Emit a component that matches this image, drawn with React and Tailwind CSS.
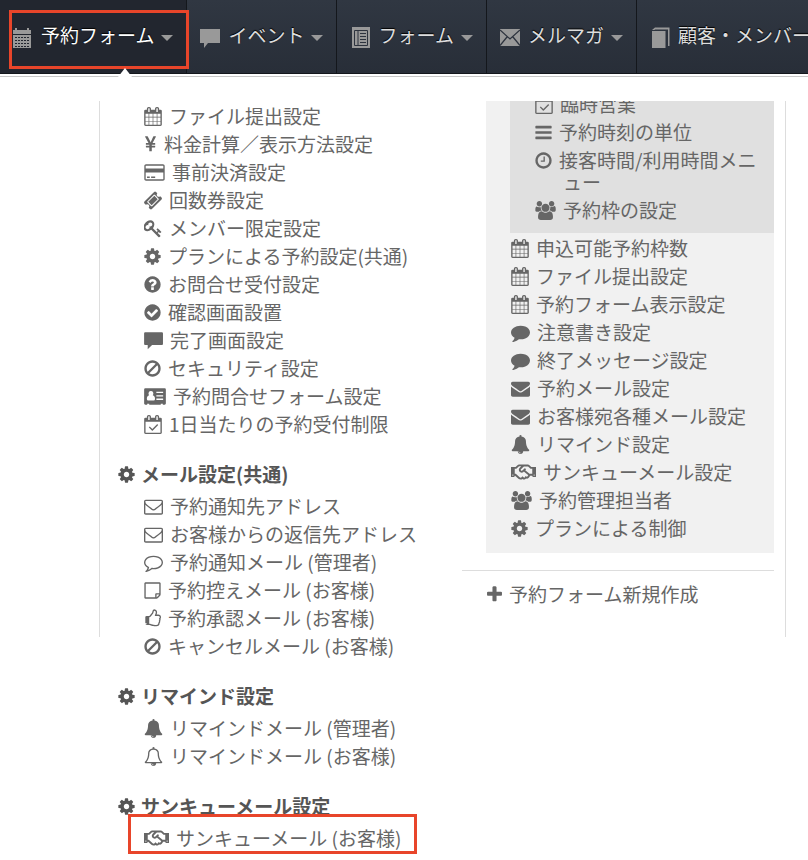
import { FaRegHandshake } from 'react-icons/fa'

// solid glyphs, every one is 1792 units high
const GLYPHS = {
  calendar: {
    box: '64 0 1664 1792',
    size: 'w-[18px]',
    d: 'M192 1664h288v-288h-288v288zm352 0h320v-288h-320v288zm-352-352h288v-320h-288v320zm352 0h320v-320h-320v320zm-352-384h288v-288h-288v288zm736 736h320v-288h-320v288zm-384-736h320v-288h-320v288zm768 736h288v-288h-288v288zm-384-352h320v-320h-320v320zm-352-864v-288q0-13-9.5-22.5t-22.5-9.5h-64q-13 0-22.5 9.5t-9.5 22.5v288q0 13 9.5 22.5t22.5 9.5h64q13 0 22.5-9.5t9.5-22.5zm736 864h288v-320h-288v320zm-384-384h320v-288h-320v288zm384 0h288v-288h-288v288zm32-480v-288q0-13-9.5-22.5t-22.5-9.5h-64q-13 0-22.5 9.5t-9.5 22.5v288q0 13 9.5 22.5t22.5 9.5h64q13 0 22.5-9.5t9.5-22.5zm384-64v1280q0 52-38 90t-90 38h-1408q-52 0-90-38t-38-90v-1280q0-52 38-90t90-38h128v-96q0-66 47-113t113-47h64q66 0 113 47t47 113v96h384v-96q0-66 47-113t113-47h64q66 0 113 47t47 113v96h128q52 0 90 38t38 90z',
  },
  calendarCheck: {
    box: '0 0 1664 1792',
    size: 'w-[18px]',
    d: 'M1303 964l-512 512q-10 9-23 9t-23-9l-288-288q-9-10-9-23t9-22l46-46q9-9 22-9t23 9l220 220 444-444q10-9 23-9t22 9l46 46q9 9 9 22t-9 23zm-1175 700h1408v-1024h-1408v1024zm384-1216v-288q0-14-9-23t-23-9h-64q-14 0-23 9t-9 23v288q0 14 9 23t23 9h64q14 0 23-9t9-23zm768 0v-288q0-14-9-23t-23-9h-64q-14 0-23 9t-9 23v288q0 14 9 23t23 9h64q14 0 23-9t9-23zm384-64v1280q0 52-38 90t-90 38h-1408q-52 0-90-38t-38-90v-1280q0-52 38-90t90-38h128v-96q0-66 47-113t113-47h64q66 0 113 47t47 113v96h384v-96q0-66 47-113t113-47h64q66 0 113 47t47 113v96h128q52 0 90 38t38 90z',
  },
  yen: {
    box: '382 0 1028 1792',
    size: 'w-[13px]',
    d: 'M985.5 1536h-172q-13 0-22.5-9t-9.5-23v-330h-288q-13 0-22.5-9t-9.5-23v-103q0-13 9.5-22.5t22.5-9.5h288v-85h-288q-13 0-22.5-9t-9.5-23v-104q0-13 9.5-22.5t22.5-9.5h214l-321-578q-8-16 0-32 10-16 28-16h194q19 0 29 18l215 425q19 38 56 125 10-24 30.5-68t27.5-61l191-420q8-19 29-19h191q17 0 27 16 9 14 1 31l-313 579h215q13 0 22.5 9.5t9.5 22.5v104q0 14-9.5 23t-22.5 9h-290v85h290q13 0 22.5 9.5t9.5 22.5v103q0 14-9.5 23t-22.5 9h-290v330q0 13-9.5 22.5t-22.5 9.5z',
  },
  card: {
    box: '0 0 1920 1792',
    size: 'w-[21px]',
    d: 'M1760 128q66 0 113 47t47 113v1216q0 66-47 113t-113 47h-1600q-66 0-113-47t-47-113v-1216q0-66 47-113t113-47h1600zm-1600 128q-13 0-22.5 9.5t-9.5 22.5v224h1664v-224q0-13-9.5-22.5t-22.5-9.5h-1600zm1600 1280q13 0 22.5-9.5t9.5-22.5v-608h-1664v608q0 13 9.5 22.5t22.5 9.5h1600zm-1504-128v-128h256v128h-256zm384 0v-128h384v128h-384z',
  },
  ticket: {
    box: '64 0 1664 1792',
    size: 'w-[18px]',
    d: 'M1024 452l316 316-572 572-316-316zm-211 979l618-618q19-19 19-45t-19-45l-362-362q-18-18-45-18t-45 18l-618 618q-19 19-19 45t19 45l362 362q18 18 45 18t45-18zm889-637l-907 908q-37 37-90.5 37t-90.5-37l-126-126q56-56 56-136t-56-136-136-56-136 56l-125-126q-37-37-37-90.5t37-90.5l907-906q37-37 90.5-37t90.5 37l125 125q-56 56-56 136t56 136 136 56 136-56l126 125q37 37 37 90.5t-37 90.5z',
  },
  key: {
    box: '64 0 1664 1792',
    size: 'w-[18px]',
    d: 'M832 512q0-80-56-136t-136-56-136 56-56 136q0 42 19 83-41-19-83-19-80 0-136 56t-56 136 56 136 136 56 136-56 56-136q0-42-19-83 41 19 83 19 80 0 136-56t56-136zm851 704q0 17-49 66t-66 49q-9 0-28.5-16t-36.5-33-38.5-40-24.5-26l-96 96 220 220q28 28 28 68 0 42-39 81t-81 39q-40 0-68-28l-671-671q-176 131-365 131-163 0-265.5-102.5t-102.5-265.5q0-160 95-313t248-248 313-95q163 0 265.5 102.5t102.5 265.5q0 189-131 365l355 355 96-96q-3-3-26-24.5t-40-38.5-33-36.5-16-28.5q0-17 49-66t66-49q13 0 23 10 6 6 46 44.5t82 79.5 86.5 86 73 78 28.5 41z',
  },
  cog: {
    box: '128 0 1536 1792',
    size: 'w-[17px]',
    d: 'M1152 896q0-106-75-181t-181-75-181 75-75 181 75 181 181 75 181-75 75-181zm512-109v222q0 12-8 23t-20 13l-185 28q-19 54-39 91 35 50 107 138 10 12 10 25t-9 23q-27 37-99 108t-94 71q-12 0-26-9l-138-108q-44 23-91 38-16 136-29 186-7 28-36 28h-222q-14 0-24.5-8.5t-11.5-21.5l-28-184q-49-16-90-37l-141 107q-10 9-25 9-14 0-25-11-126-114-165-168-7-10-7-23 0-12 8-23 15-21 51-66.5t54-70.5q-27-50-41-99l-183-27q-13-2-21-12.5t-8-23.5v-222q0-12 8-23t19-13l186-28q14-46 39-92-40-57-107-138-10-12-10-24 0-10 9-23 26-36 98.5-107.5t94.5-71.5q13 0 26 10l138 107q44-23 91-38 16-136 29-186 7-28 36-28h222q14 0 24.5 8.5t11.5 21.5l28 184q49 16 90 37l142-107q9-9 24-9 13 0 25 10 129 119 165 170 7 8 7 22 0 12-8 23-15 21-51 66.5t-54 70.5q26 50 41 98l183 28q13 2 21 12.5t8 23.5z',
  },
  question: {
    box: '128 0 1536 1792',
    size: 'w-[17px]',
    d: 'M1024 1376v-192q0-14-9-23t-23-9h-192q-14 0-23 9t-9 23v192q0 14 9 23t23 9h192q14 0 23-9t9-23zm256-672q0-88-55.5-163t-138.5-116-170-41q-243 0-371 213-15 24 8 42l132 100q7 6 19 6 16 0 25-12 53-68 86-92 34-24 86-24 48 0 85.5 26t37.5 59q0 38-20 61t-68 45q-63 28-115.5 86.5t-52.5 125.5v36q0 14 9 23t23 9h192q14 0 23-9t9-23q0-19 21.5-49.5t54.5-49.5q32-18 49-28.5t46-35 44.5-48 28-60.5 12.5-81zm384 192q0 209-103 385.5t-279.5 279.5-385.5 103-385.5-103-279.5-279.5-103-385.5 103-385.5 279.5-279.5 385.5-103 385.5 103 279.5 279.5 103 385.5z',
  },
  check: {
    box: '128 0 1536 1792',
    size: 'w-[17px]',
    d: 'M1412 734q0-28-18-46l-91-90q-19-19-45-19t-45 19l-408 407-226-226q-19-19-45-19t-45 19l-91 90q-18 18-18 46 0 27 18 45l362 362q19 19 45 19 27 0 46-19l543-543q18-18 18-45zm252 162q0 209-103 385.5t-279.5 279.5-385.5 103-385.5-103-279.5-279.5-103-385.5 103-385.5 279.5-279.5 385.5-103 385.5 103 279.5 279.5 103 385.5z',
  },
  message: {
    box: '0 0 1792 1792',
    size: 'w-[19px]',
    d: 'M110 110h1580q100 0 100 100v1010q0 100-100 100h-930l-410 400v-400h-240q-100 0-100-100v-1010q0-100 100-100z',
  },
  ban: {
    box: '128 0 1536 1792',
    size: 'w-[17px]',
    d: 'M1440 893q0-161-87-295l-754 753q137 89 297 89 111 0 211.5-43.5t173.5-116.5 116-174.5 43-212.5zm-999 299l755-754q-135-91-300-91-148 0-273 73t-198 199-73 274q0 162 89 299zm1223-299q0 157-61 300t-163.5 246-245 164-298.5 61-298.5-61-245-164-163.5-246-61-300 61-299.5 163.5-245.5 245-164 298.5-61 298.5 61 245 164 163.5 245.5 61 299.5z',
  },
  addressCard: {
    box: '0 0 2048 1792',
    size: 'w-[22px]',
    d: 'M110 128h1828q110 0 110 110v1316q0 110-110 110h-178v-96h-192v96h-1088v-96h-192v96h-178q-110 0-110-110v-1316q0-110 110-110zM640 384a230 230 0 0 0-170 385q-214 40-214 360 0 151 130 151h508q130 0 130-151 0-320-214-360a230 230 0 0 0-170-385zM1152 448v128h640v-128zM1152 768v128h640v-128zM1152 1088v128h640v-128z',
  },
  envelopeOutline: {
    box: '0 0 1792 1792',
    size: 'w-[19px]',
    d: 'M1664 1504v-768q-32 36-69 66-268 206-426 338-51 43-83 67t-86.5 48.5-102.5 24.5h-2q-48 0-102.5-24.5t-86.5-48.5-83-67q-158-132-426-338-37-30-69-66v768q0 13 9.5 22.5t22.5 9.5h1472q13 0 22.5-9.5t9.5-22.5zm0-1051v-24.5l-.5-13-3-12.5-5.5-9-9-7.5-14-2.5h-1472q-13 0-22.5 9.5t-9.5 22.5q0 168 147 284 193 152 401 317 6 5 35 29.5t46 37.5 44.5 31.5 50.5 27.5 43 9h2q20 0 43-9t50.5-27.5 44.5-31.5 46-37.5 35-29.5q208-165 401-317 54-43 100.5-115.5t46.5-131.5zm128-37v1088q0 66-47 113t-113 47h-1472q-66 0-113-47t-47-113v-1088q0-66 47-113t113-47h1472q66 0 113 47t47 113z',
  },
  envelope: {
    box: '0 0 1792 1792',
    size: 'w-[19px]',
    d: 'M1792 710v794q0 66-47 113t-113 47h-1472q-66 0-113-47t-47-113v-794q44 49 101 87 362 246 497 345 57 42 92.5 65.5t94.5 48 110 24.5h2q51 0 110-24.5t94.5-48 92.5-65.5q170-123 498-345 57-39 100-87zm0-294q0 79-49 151t-122 123q-376 261-468 325-10 7-42.5 31t-54 38.5-52 32.5-57.5 27-50 9h-2q-23 0-50-9t-57.5-27-52-32.5-54-38.5-42.5-31q-91-64-262-182.5t-205-142.5q-62-42-117-115.5t-55-136.5q0-78 41.5-130t118.5-52h1472q65 0 112.5 47t47.5 113z',
  },
  commentOutline: {
    box: '0 0 1792 1792',
    size: 'w-[19px]',
    d: 'M896 384q-204 0-381.5 69.5t-282 187.5-104.5 255q0 112 71.5 213.5t201.5 175.5l87 50-27 96q-24 91-70 172 152-63 275-171l43-38 57 6q69 8 130 8 204 0 381.5-69.5t282-187.5 104.5-255-104.5-255-282-187.5-381.5-69.5zm896 512q0 174-120 321.5t-326 233-450 85.5q-70 0-145-8-198 175-460 242-49 14-114 22h-5q-15 0-27-10.5t-16-27.5v-1q-3-4-.5-12t2-10 4.5-9.5l6-9 7-8.5 8-9q7-8 31-34.5t34.5-38 31-39.5 32.5-51 27-59 26-76q-157-89-247.5-220t-90.5-281q0-174 120-321.5t326-233 450-85.5 450 85.5 326 233 120 321.5z',
  },
  comment: {
    box: '0 0 1792 1792',
    size: 'w-[19px]',
    d: 'M1792 896q0 174-120 321.5t-326 233-450 85.5q-70 0-145-8-198 175-460 242-49 14-114 22-17 2-30.5-9t-17.5-29v-1q-3-4-.5-12t2-10 4.5-9.5l6-9 7-8.5 8-9q7-8 31-34.5t34.5-38 31-39.5 32.5-51 27-59 26-76q-157-89-247.5-220t-90.5-281q0-130 71-248.5t191-204.5 286-136.5 348-50.5q244 0 450 85.5t326 233 120 321.5z',
  },
  note: {
    box: '0 0 1536 1792',
    size: 'w-[17px]',
    d: 'M1400 1280h-248v248q29-10 41-22l185-185q12-12 22-41zm-280-128h288v-896h-1280v1280h896v-288q0-40 28-68t68-28zm416-928v1024q0 40-20 88t-48 76l-184 184q-28 28-76 48t-88 20h-1024q-40 0-68-28t-28-68v-1344q0-40 28-68t68-28h1344q40 0 68 28t28 68z',
  },
  thumbsUp: {
    box: '0 0 1664 1792',
    size: 'w-[17px]',
    d: 'M256 1408q0-26-19-45t-45-19-45 19-19 45 19 45 45 19 45-19 19-45zm1280-640q0-51-39-89.5t-89-38.5h-352q0-58 48-159.5t48-160.5q0-98-32-145t-128-47q-26 26-38 85t-30.5 125.5-59.5 109.5q-22 23-77 91-4 5-23 30t-31.5 41-34.5 42.5-40 44-38.5 35.5-40 27-35.5 9h-32v640h32q13 0 31.5 3t33 6.5 38 11 35 11.5 35.5 12.5 29 10.5q211 73 342 73h121q192 0 192-167 0-26-5-56 30-16 47.5-52.5t17.5-73.5-18-69q53-50 53-119 0-25-10-55.5t-25-47.5q32-1 53.5-47t21.5-81zm128-1q0 89-49 163 9 33 9 69 0 77-38 144 3 21 3 43 0 101-60 178 1 139-85 219.5t-227 80.5h-129q-96 0-189.5-22.5t-216.5-65.5q-116-40-138-40h-288q-53 0-90.5-37.5t-37.5-90.5v-640q0-53 37.5-90.5t90.5-37.5h274q36-24 137-155 58-75 107-128 24-25 35.5-85.5t30.5-126.5 62-108q39-37 90-37 84 0 151 32.5t102 101.5 35 186q0 93-48 192h176q104 0 180 76t76 179z',
  },
  bell: {
    box: '0 0 1792 1792',
    size: 'w-[19px]',
    d: 'M912 1696q0-16-16-16-59 0-101.5-42.5t-42.5-101.5q0-16-16-16t-16 16q0 73 51.5 124.5t124.5 51.5q16 0 16-16zm816-288q0 52-38 90t-90 38h-448q0 106-75 181t-181 75-181-75-75-181h-448q-52 0-90-38t-38-90q50-42 91-88t85-119.5 74.5-158.5 50-206 19.5-260q0-152 117-282.5t307-158.5q-8-19-8-39 0-40 28-68t68-28 68 28 28 68q0 20-8 39 190 28 307 158.5t117 282.5q0 139 19.5 260t50 206 74.5 158.5 85 119.5 91 88z',
  },
  bellOutline: {
    box: '0 0 1792 1792',
    size: 'w-[19px]',
    d: 'M912 1696q0-16-16-16-59 0-101.5-42.5t-42.5-101.5q0-16-16-16t-16 16q0 73 51.5 124.5t124.5 51.5q16 0 16-16zm-666-288h1300q-266-300-266-832 0-51-24-105t-69-103-121.5-80.5-169.5-31.5-169.5 31.5-121.5 80.5-69 103-24 105q0 532-266 832zm1482 0q0 52-38 90t-90 38h-448q0 106-75 181t-181 75-181-75-75-181h-448q-52 0-90-38t-38-90q50-42 91-88t85-119.5 74.5-158.5 50-206 19.5-260q0-152 117-282.5t307-158.5q-8-19-8-39 0-40 28-68t68-28 68 28 28 68q0 20-8 39 190 28 307 158.5t117 282.5q0 139 19.5 260t50 206 74.5 158.5 85 119.5 91 88z',
  },
  bars: {
    box: '128 0 1536 1792',
    size: 'w-[17px]',
    d: 'M1664 1344v128q0 26-19 45t-45 19h-1408q-26 0-45-19t-19-45v-128q0-26 19-45t45-19h1408q26 0 45 19t19 45zm0-512v128q0 26-19 45t-45 19h-1408q-26 0-45-19t-19-45v-128q0-26 19-45t45-19h1408q26 0 45 19t19 45zm0-512v128q0 26-19 45t-45 19h-1408q-26 0-45-19t-19-45v-128q0-26 19-45t45-19h1408q26 0 45 19t19 45z',
  },
  clock: {
    box: '128 0 1536 1792',
    size: 'w-[17px]',
    d: 'M1024 544v448q0 14-9 23t-23 9h-320q-14 0-23-9t-9-23v-64q0-14 9-23t23-9h224v-352q0-14 9-23t23-9h64q14 0 23 9t9 23zm416 352q0-148-73-273t-198-198-273-73-273 73-198 198-73 273 73 273 198 198 273 73 273-73 198-198 73-273zm224 0q0 209-103 385.5t-279.5 279.5-385.5 103-385.5-103-279.5-279.5-103-385.5 103-385.5 279.5-279.5 385.5-103 385.5 103 279.5 279.5 103 385.5z',
  },
  users: {
    box: '0 0 1920 1792',
    size: 'w-[21px]',
    d: 'M593 896q-162 5-265 128h-134q-82 0-138-40.5t-56-118.5q0-353 124-353 6 0 43.5 21t97.5 42.5 119 21.5q67 0 133-23-5 37-5 66 0 159 90 293zm1071 637q0 120-73 189.5t-194 69.5h-874q-121 0-194-69.5t-73-189.5q0-53 3.5-103.5t14-109 26.5-108.5 43-97.5 62-81 85.5-53.5 111.5-20q10 0 43 21.5t73 48 107 48 135 21.5 135-21.5 107-48 73-48 43-21.5q61 0 111.5 20t85.5 53.5 62 81 43 97.5 26.5 108.5 14 109 3.5 103.5zm-1024-1277q0 106-75 181t-181 75-181-75-75-181 75-181 181-75 181 75 75 181zm704 384q0 159-112.5 271.5t-271.5 112.5-271.5-112.5-112.5-271.5 112.5-271.5 271.5-112.5 271.5 112.5 112.5 271.5zm576 225q0 78-56 118.5t-138 40.5h-134q-103-123-265-128 90-134 90-293 0-29-5-66 66 23 133 23 59 0 119-21.5t97.5-42.5 43.5-21q124 0 124 353zm-128-609q0 106-75 181t-181 75-181-75-75-181 75-181 181-75 181 75 75 181z',
  },
  plus: {
    box: '192 0 1408 1792',
    size: 'w-[15px]',
    d: 'M1600 736v192q0 40-28 68t-68 28h-416v416q0 40-28 68t-68 28h-192q-40 0-68-28t-28-68v-416h-416q-40 0-68-28t-28-68v-192q0-40 28-68t68-28h416v-416q0-40 28-68t68-28h192q40 0 68 28t28 68v416h416q40 0 68 28t28 68z',
  },
}

const Icon = ({ name }) => {
  if (name === 'handshake') {
    return <FaRegHandshake className="w-[25px] h-[20px] shrink-0" aria-hidden="true" />
  }
  const glyph = GLYPHS[name]
  return (
    <svg
      viewBox={glyph.box}
      className={`h-[19px] shrink-0 ${glyph.size}`}
      fill="currentColor"
      fillRule={name === 'addressCard' ? 'evenodd' : 'nonzero'}
      aria-hidden="true"
    >
      <path d={glyph.d} />
    </svg>
  )
}

const NavIcon = ({ name }) => (
  <svg viewBox="0 0 20 24" className="w-5 h-6 mt-1 shrink-0" fill="#999" aria-hidden="true">
    {name === 'calendar' && (
      <>
        <path d="M0 4h2V2h2v2h10V2h2v2h2v4H0z" />
        <path d="M0 9h18v13H0z" />
        <path
          d="M2 11.5h14M2 14.5h14M2 17.5h14M2 20.5h14"
          stroke="#22262f"
          strokeDasharray="2 1"
        />
      </>
    )}
    {name === 'message' && <path d="M0 3h20v14H8l-4 5v-5H0z" />}
    {name === 'list' && (
      <>
        <path d="M2 1h18v21H2z" />
        <path
          d="M4.5 4.5h13v15h-13zM8 4.5v15M10 7.5h6M10 10.5h6M10 13.5h6M10 16.5h6"
          fill="none"
          stroke="#2d333e"
        />
      </>
    )}
    {name === 'mail' && (
      <>
        <path d="M0 3h20v17H0z" />
        <path
          d="M0 4l10 9 10-9M0 19.5l7-8.5M20 19.5l-7-8.5"
          fill="none"
          stroke="#2d333e"
          strokeWidth="1.3"
        />
      </>
    )}
    {name === 'book' && (
      <>
        <path d="M2 5h13.500v17H2z" />
        <path d="M2 4l3-2.500h14.500V20H18V3.500H5L4.500 4z" />
      </>
    )}
  </svg>
)

const navItems = [
  { label: '予約フォーム', icon: 'calendar', active: true },
  { label: 'イベント', icon: 'message' },
  { label: 'フォーム', icon: 'list' },
  { label: 'メルマガ', icon: 'mail' },
  { label: '顧客・メンバー', icon: 'book' },
]

const commonItems = [
  { icon: 'calendar', label: 'ファイル提出設定' },
  { icon: 'yen', label: '料金計算／表示方法設定' },
  { icon: 'card', label: '事前決済設定' },
  { icon: 'ticket', label: '回数券設定' },
  { icon: 'key', label: 'メンバー限定設定' },
  { icon: 'cog', label: 'プランによる予約設定(共通)' },
  { icon: 'question', label: 'お問合せ受付設定' },
  { icon: 'check', label: '確認画面設置' },
  { icon: 'message', label: '完了画面設定' },
  { icon: 'ban', label: 'セキュリティ設定' },
  { icon: 'addressCard', label: '予約問合せフォーム設定' },
  { icon: 'calendarCheck', label: '1日当たりの予約受付制限' },
]

const sections = [
  {
    title: 'メール設定(共通)',
    items: [
      { icon: 'envelopeOutline', label: '予約通知先アドレス' },
      { icon: 'envelopeOutline', label: 'お客様からの返信先アドレス' },
      { icon: 'commentOutline', label: '予約通知メール (管理者)' },
      { icon: 'note', label: '予約控えメール (お客様)' },
      { icon: 'thumbsUp', label: '予約承認メール (お客様)' },
      { icon: 'ban', label: 'キャンセルメール (お客様)' },
    ],
  },
  {
    title: 'リマインド設定',
    items: [
      { icon: 'bell', label: 'リマインドメール (管理者)' },
      { icon: 'bellOutline', label: 'リマインドメール (お客様)' },
    ],
  },
  {
    title: 'サンキューメール設定',
    items: [{ icon: 'handshake', label: 'サンキューメール (お客様)', marked: true }],
  },
]

const scheduleItems = [
  { icon: 'calendarCheck', label: '臨時営業' },
  { icon: 'bars', label: '予約時刻の単位' },
  { icon: 'clock', label: '接客時間/利用時間メニュー' },
  { icon: 'users', label: '予約枠の設定' },
]

const formItems = [
  { icon: 'calendar', label: '申込可能予約枠数' },
  { icon: 'calendar', label: 'ファイル提出設定' },
  { icon: 'calendar', label: '予約フォーム表示設定' },
  { icon: 'comment', label: '注意書き設定' },
  { icon: 'comment', label: '終了メッセージ設定' },
  { icon: 'envelope', label: '予約メール設定' },
  { icon: 'envelope', label: 'お客様宛各種メール設定' },
  { icon: 'bell', label: 'リマインド設定' },
  { icon: 'handshake', label: 'サンキューメール設定' },
  { icon: 'users', label: '予約管理担当者' },
  { icon: 'cog', label: 'プランによる制御' },
]

const MenuLink = ({ icon, label }) => (
  <a href="#" className="flex items-start gap-[7px] py-[3px] leading-[22px] hover:text-black">
    <span className="flex h-[22px] items-center shrink-0">
      <Icon name={icon} />
    </span>
    <span className="pl-1 -indent-1">{label}</span>
  </a>
)

const MenuList = ({ items, className }) => (
  <ul className={className}>
    {items.map((item, i) => (
      <li key={i} className="relative">
        <MenuLink icon={item.icon} label={item.label} />
        {item.marked && (
          <span className="absolute -left-4 -top-2.5 -bottom-0.5 w-[289px] border-3 border-[#e8452a] pointer-events-none" />
        )}
      </li>
    ))}
  </ul>
)

const NavBar = () => (
  <nav className="relative border-b border-[#14171c] bg-linear-to-b from-[#303742] to-[#282e38]">
    <ul className="flex overflow-hidden">
      {navItems.map((item) => (
        <li
          key={item.label}
          className={`shrink-0 border-r border-[#14171c] ${item.active ? 'bg-[#22262f]' : ''}`}
        >
          <button
            type="button"
            className={`flex h-[73px] items-center px-[13px] pb-0.5 whitespace-nowrap text-shadow-[0_-1px_1px_#000] ${
              item.active ? 'text-white' : 'text-[#ddd]'
            }`}
          >
            <NavIcon name={item.icon} />
            <span className="ml-2 mr-[7px]">{item.label}</span>
            <svg viewBox="0 0 12 6" className="w-3 h-1.5 shrink-0 mt-1" fill="#999" aria-hidden="true">
              <path d="M0 0h12L6 6z" />
            </svg>
          </button>
        </li>
      ))}
    </ul>
    <span className="absolute left-[9px] top-2.5 h-[59px] w-[180px] border-3 border-[#e8452a] pointer-events-none" />
    <svg viewBox="0 0 14 9" className="absolute left-[118px] top-[68px] z-10 w-3.5 h-[9px]" aria-hidden="true">
      <path d="M0 9L7 0l7 9z" fill="#fff" />
    </svg>
  </nav>
)

const App = () => {
  return (
    <div className="min-h-screen bg-white text-[19px] text-[#666] font-['Noto_Sans_CJK_JP','Noto_Sans',sans-serif]">
      <NavBar />
      <div className="h-[3px] border-b border-[#c8c8c8]" />

      <div className="mt-6 flex items-start">
        <div className="h-[536px] w-25 shrink-0 border-r border-[#ddd]" />

        <div className="flex-1 pl-[18px] pt-px">
          <MenuList items={commonItems} className="pl-[26px]" />
          {sections.map((section) => (
            <section key={section.title} className="mt-[22px]">
              <h2 className="flex items-center gap-1.5 mb-1 leading-7 font-bold text-[#555]">
                <Icon name="cog" />
                {section.title}
              </h2>
              <MenuList items={section.items} className="pl-[26px]" />
            </section>
          ))}
        </div>

        <div className="h-[536px] w-[324px] shrink-0 mr-[22px] pr-[11px] border-r border-[#ddd] overflow-hidden">
          <div className="overflow-hidden">
            <div className="ml-6 bg-[#f1f1f1] pb-[11px]">
              <MenuList items={scheduleItems} className="ml-6 -mt-[11px] bg-[#e0e0e0] pl-[25px] pb-[9px]" />
              <MenuList items={formItems} className="pl-[25px] pt-px" />
            </div>
          </div>
          <div className="mt-[17px] border-t border-[#ddd] pt-[9px] pl-[25px]">
            <MenuLink icon="plus" label="予約フォーム新規作成" />
          </div>
        </div>
      </div>
    </div>
  )
}

export default App
